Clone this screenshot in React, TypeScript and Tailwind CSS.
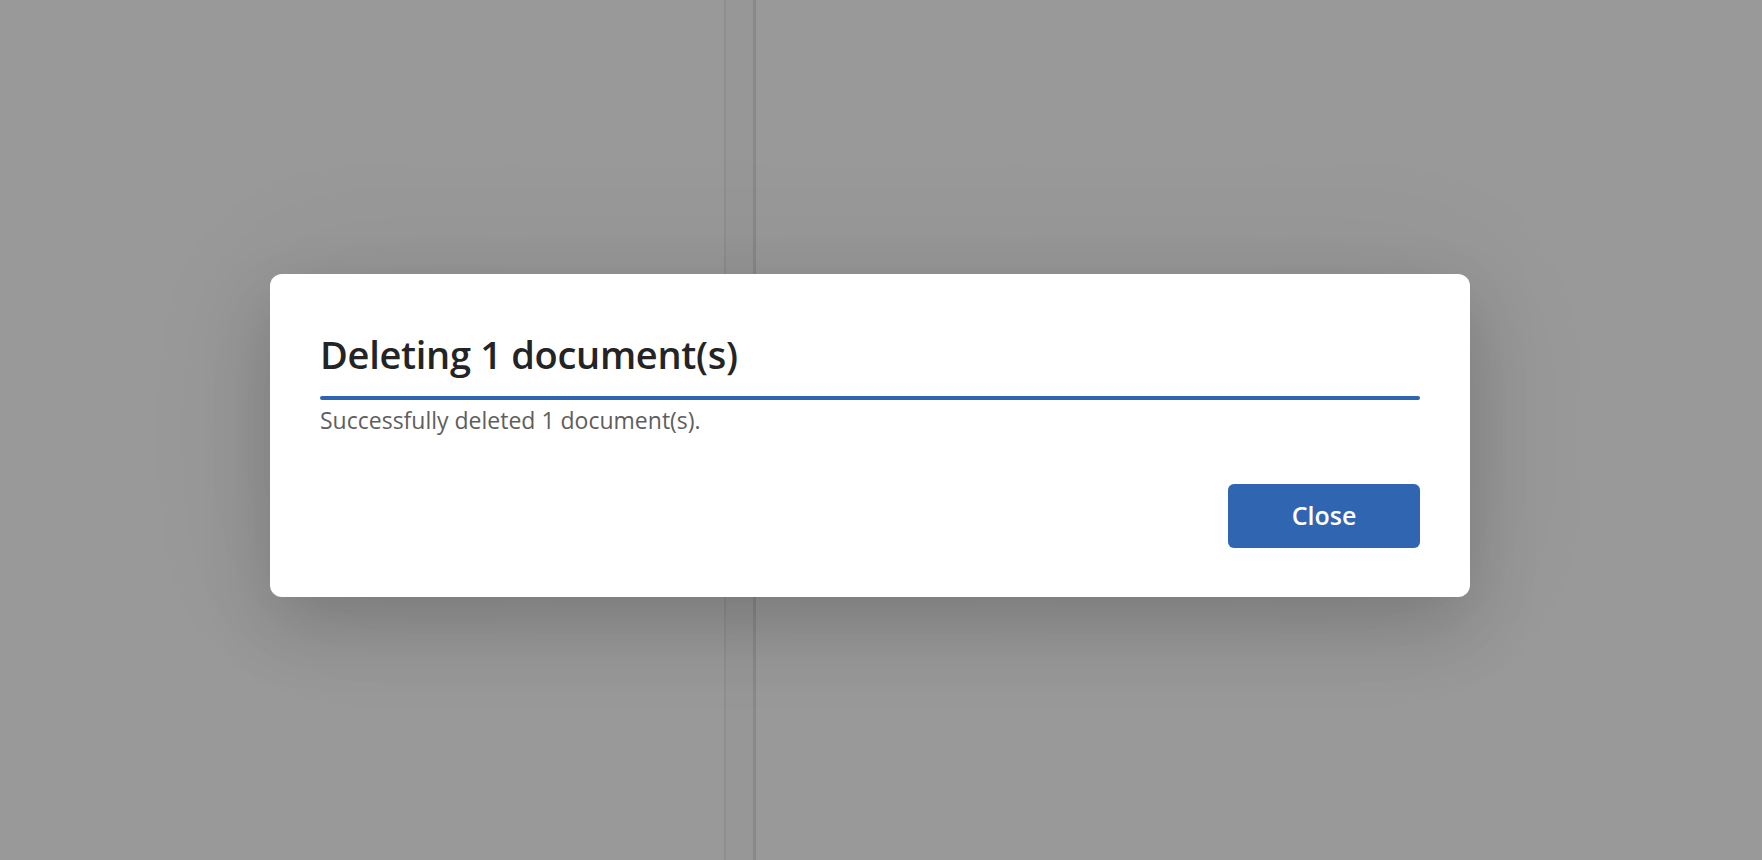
export default function App() {
  return (
    <div
      className="relative h-[860px] w-full overflow-hidden bg-[#999999]"
      style={{ fontFamily: "'Open Sans', 'Noto Sans', sans-serif" }}
    >
      {/* page behind the overlay */}
      <div className="flex h-full">
        <div className="w-[724px]" />
        <div className="w-[2px] bg-[#8f8f8f]" />
        <div className="w-[27px] bg-[#979797]" />
        <div className="w-[3px] bg-[#898989]" />
        <div className="flex-1" />
      </div>

      {/* dialog */}
      <div className="absolute left-[270px] top-[274px] flex w-[1200px] flex-col rounded-xl bg-white px-[50px] pb-[49px] pt-[57px] shadow-[0_28px_70px_rgba(0,0,0,0.16),0_0_140px_rgba(0,0,0,0.08)]">
        <h2 className="text-[38px] font-semibold leading-[46px] tracking-[-0.3px] text-[#242424]">
          Deleting 1 document(s)
        </h2>
        <div className="mt-[19px] h-[4px] w-full rounded-full bg-[#2f64b0]" />
        <p className="mt-[5px] text-[23px] leading-[30px] text-[#5e5e5e]">
          Successfully deleted 1 document(s).
        </p>
        <div className="mt-[49px] flex justify-end">
          <button className="h-[64px] w-[192px] rounded-md bg-[#3066b1] text-[25px] font-semibold text-white">
            Close
          </button>
        </div>
      </div>
    </div>
  );
}
